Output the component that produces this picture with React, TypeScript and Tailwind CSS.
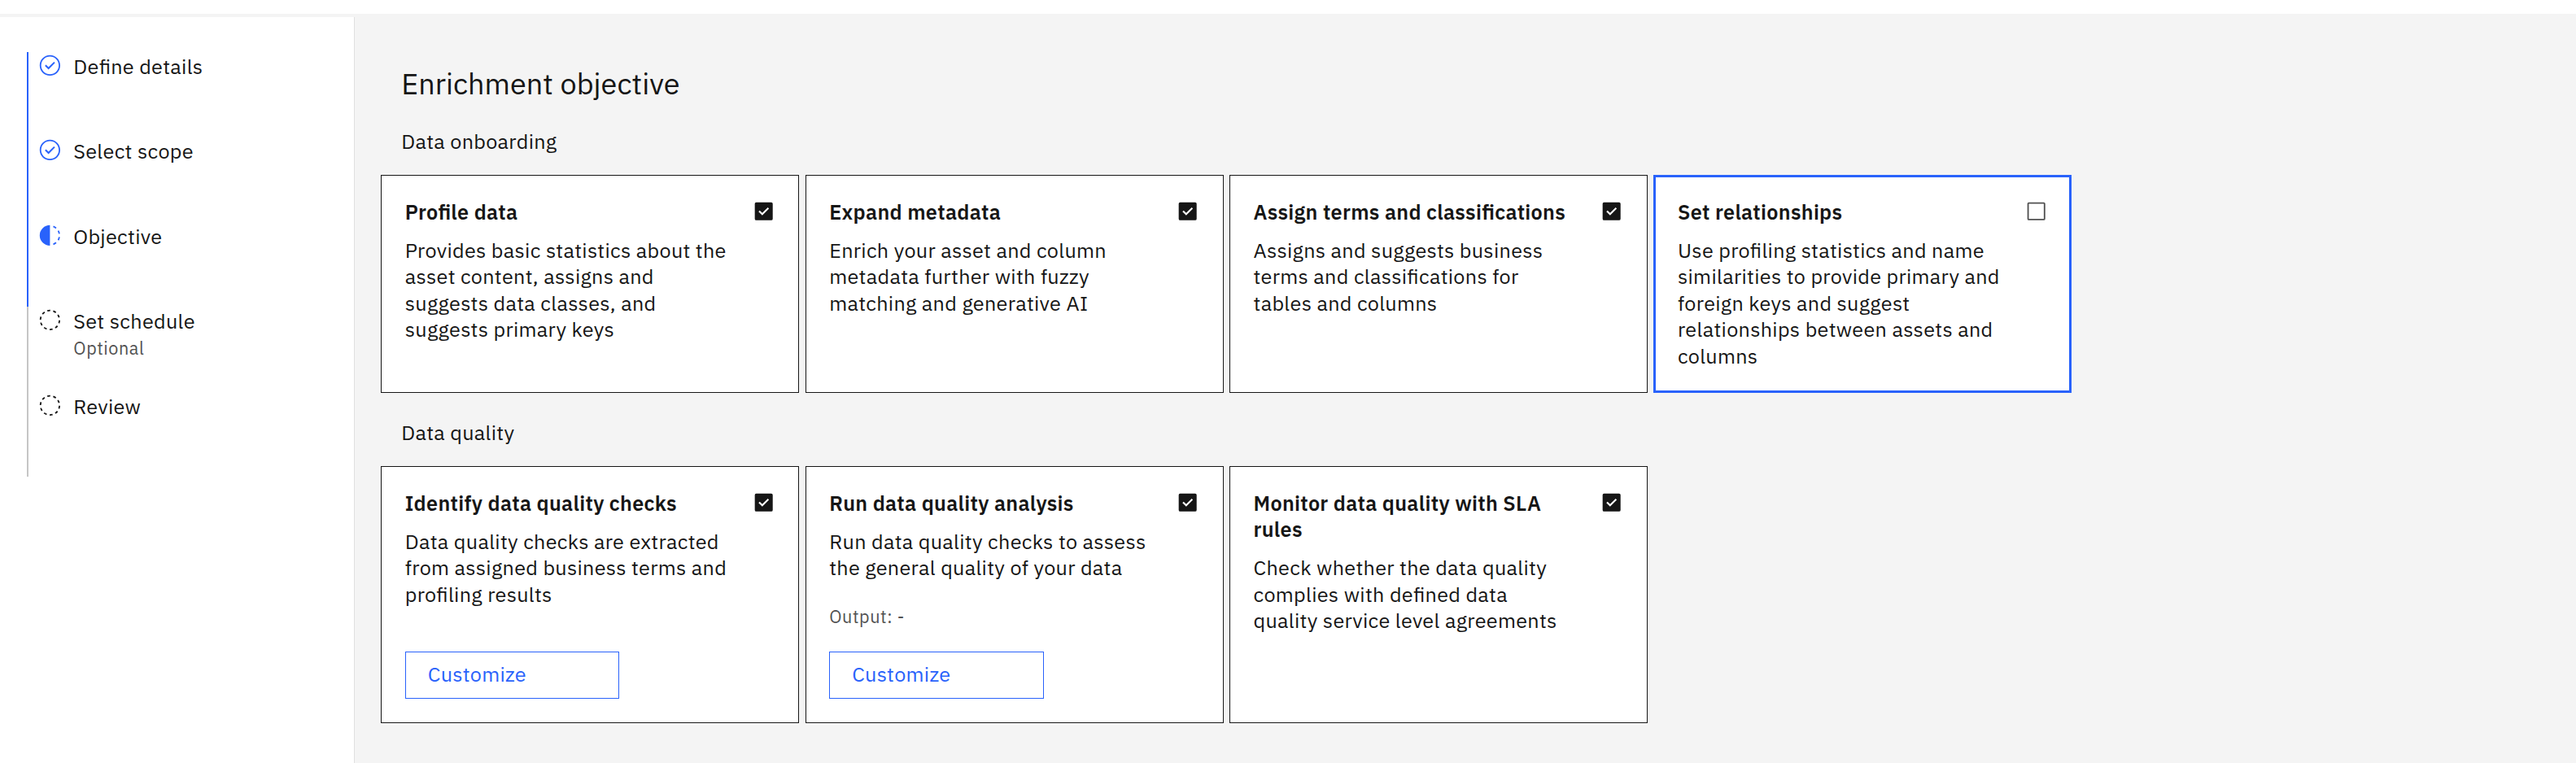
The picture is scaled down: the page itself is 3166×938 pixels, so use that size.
import React from "react";

type Card = {
  title: string;
  lines: string;
  checked: boolean;
  output?: string;
  action?: string;
};

const onboarding: Card[] = [
  {
    title: "Profile data",
    lines:
      "Provides basic statistics about the\nasset content, assigns and\nsuggests data classes, and\nsuggests primary keys",
    checked: true,
  },
  {
    title: "Expand metadata",
    lines:
      "Enrich your asset and column\nmetadata further with fuzzy\nmatching and generative AI",
    checked: true,
  },
  {
    title: "Assign terms and classifications",
    lines:
      "Assigns and suggests business\nterms and classifications for\ntables and columns",
    checked: true,
  },
  {
    title: "Set relationships",
    lines:
      "Use profiling statistics and name\nsimilarities to provide primary and\nforeign keys and suggest\nrelationships between assets and\ncolumns",
    checked: false,
  },
];

const quality: Card[] = [
  {
    title: "Identify data quality checks",
    lines:
      "Data quality checks are extracted\nfrom assigned business terms and\nprofiling results",
    checked: true,
    action: "Customize",
  },
  {
    title: "Run data quality analysis",
    lines: "Run data quality checks to assess\nthe general quality of your data",
    checked: true,
    output: "Output: -",
    action: "Customize",
  },
  {
    title: "Monitor data quality with SLA\nrules",
    lines:
      "Check whether the data quality\ncomplies with defined data\nquality service level agreements",
    checked: true,
  },
];

type StepState = "complete" | "current" | "incomplete";

const steps: { label: string; state: StepState; note?: string }[] = [
  { label: "Define details", state: "complete" },
  { label: "Select scope", state: "complete" },
  { label: "Objective", state: "current" },
  { label: "Set schedule", state: "incomplete", note: "Optional" },
  { label: "Review", state: "incomplete" },
];

function StepIcon({ state }: { state: StepState }) {
  if (state === "complete") {
    return (
      <svg viewBox="0 0 16 16" className="size-[28.8px] shrink-0 fill-[#2962fb]">
        <path d="M8,1C4.1,1,1,4.1,1,8c0,3.9,3.1,7,7,7s7-3.1,7-7C15,4.1,11.9,1,8,1z M8,14c-3.3,0-6-2.7-6-6s2.7-6,6-6s6,2.7,6,6S11.3,14,8,14z" />
        <path d="M7 10.8L4.5 8.3 5.3 7.5 7 9.2 10.7 5.5 11.5 6.3z" />
      </svg>
    );
  }
  if (state === "current") {
    return (
      <svg viewBox="0 0 32 32" className="size-[28.8px] shrink-0 fill-[#2962fb]">
        <path d="M23.7642 6.8593l1.2851-1.5315A13.976 13.976 0 0020.8672 2.887l-.6836 1.8776A11.9729 11.9729 0 0123.7642 6.8593zM27.81 14l1.9677-.4128A13.8888 13.8888 0 0028.14 9.0457L26.4087 10A12.52 12.52 0 0127.81 14zM20.1836 27.2354l.6836 1.8776a13.976 13.976 0 004.1821-2.4408l-1.2851-1.5315A11.9729 11.9729 0 0120.1836 27.2354zM26.4087 22L28.14 23a14.14 14.14 0 001.6382-4.5872L27.81 18.0659A12.1519 12.1519 0 0126.4087 22zM16 30V2a14 14 0 000 28z" />
      </svg>
    );
  }
  return (
    <svg viewBox="0 0 32 32" className="size-[28.8px] shrink-0">
      <circle
        cx="16"
        cy="16"
        r="13"
        fill="none"
        stroke="#161616"
        strokeWidth="2"
        pathLength="360"
        strokeDasharray="18 18"
        transform="rotate(-106 16 16)"
      />
    </svg>
  );
}

function Stepper() {
  return (
    <ol className="flex flex-col">
      {steps.map((s) => (
        <li
          key={s.label}
          className={`flex h-[104.4px] border-l-2 pl-[12px] ${
            s.state === "incomplete" ? "border-[#c6c6c6]" : "border-[#2962fb]"
          }`}
        >
          <div className="pt-[2px]">
            <StepIcon state={s.state} />
          </div>
          <div className="flex flex-col gap-[2.6px] pt-[2.1px] pl-[14.5px]">
            <span>{s.label}</span>
            {s.note && (
              <span className="text-[21.6px] leading-[28.8px] tracking-[0.576px] text-[#525252]">
                {s.note}
              </span>
            )}
          </div>
        </li>
      ))}
    </ol>
  );
}

function Checkbox({ checked }: { checked: boolean }) {
  return (
    <svg
      viewBox="0 0 32 32"
      className={`size-[29.4px] shrink-0 ${checked ? "fill-[#161616]" : "fill-[#525252]"}`}
    >
      {checked ? (
        <path d="M26,4H6A2,2,0,0,0,4,6V26a2,2,0,0,0,2,2H26a2,2,0,0,0,2-2V6A2,2,0,0,0,26,4ZM14,21.5,9,16.5427,10.5908,15,14,18.3456,21.4087,11l1.5918,1.5772Z" />
      ) : (
        <path d="M26,4H6A2,2,0,0,0,4,6V26a2,2,0,0,0,2,2H26a2,2,0,0,0,2-2V6A2,2,0,0,0,26,4ZM6,26V6H26V26Z" />
      )}
    </svg>
  );
}

function Tile({ card }: { card: Card }) {
  return (
    <article
      className={`flex w-[514px] flex-col bg-white ${
        card.checked
          ? "border border-[#161616] pt-[28.7px] pr-[28.2px] pb-[29px] pl-[28.6px]"
          : "border-[3px] border-[#2962fb] pt-[26.7px] pr-[26.2px] pb-[27px] pl-[26.6px]"
      }`}
    >
      <div className="flex items-start justify-between">
        <h3 className="pt-[0.4px] font-semibold whitespace-pre">{card.title}</h3>
        <Checkbox checked={card.checked} />
      </div>
      <p className="pt-[14.4px] whitespace-pre">{card.lines}</p>
      {card.output && (
        <p className="mt-[29.6px] text-[21.6px] leading-[28.8px] tracking-[0.576px] text-[#525252]">
          {card.output}
        </p>
      )}
      {card.action && (
        <button className="mt-auto flex h-[58px] w-[263.6px] items-center border border-[#2962fb] pb-[1.6px] pl-[27px] text-[#2962fb]">
          {card.action}
        </button>
      )}
    </article>
  );
}

export default function App() {
  return (
    <div className="flex h-[938px] w-[3166px] flex-col overflow-hidden bg-[#f4f4f4] font-['IBM_Plex_Sans','Roboto','Liberation_Sans',sans-serif] text-[25.2px] leading-[32.4px] tracking-[0.3px] text-[#161616] antialiased [font-feature-settings:'liga'_1]">
      <div className="h-[17px] shrink-0 bg-white" />
      <div className="flex min-h-0 grow pt-1">
        <aside className="w-[436px] shrink-0 border-r border-[#e0e0e0] bg-white pt-[43px] pl-[33px]">
          <Stepper />
        </aside>
        <main className="flex flex-col pl-[32.2px]">
          <h1 className="pt-[58.5px] pl-[25px] text-[36px] leading-[46px] tracking-[0.03px]">
            Enrichment objective
          </h1>
          <h2 className="pt-[32.8px] pl-[25px]">Data onboarding</h2>
          <div className="mt-[24.3px] flex h-[268px] gap-[7.4px]">
            {onboarding.map((c) => (
              <Tile key={c.title} card={c} />
            ))}
          </div>
          <h2 className="pt-[33.2px] pl-[25px]">Data quality</h2>
          <div className="mt-[24.4px] flex h-[316px] gap-[7.4px]">
            {quality.map((c) => (
              <Tile key={c.title} card={c} />
            ))}
          </div>
        </main>
      </div>
    </div>
  );
}
